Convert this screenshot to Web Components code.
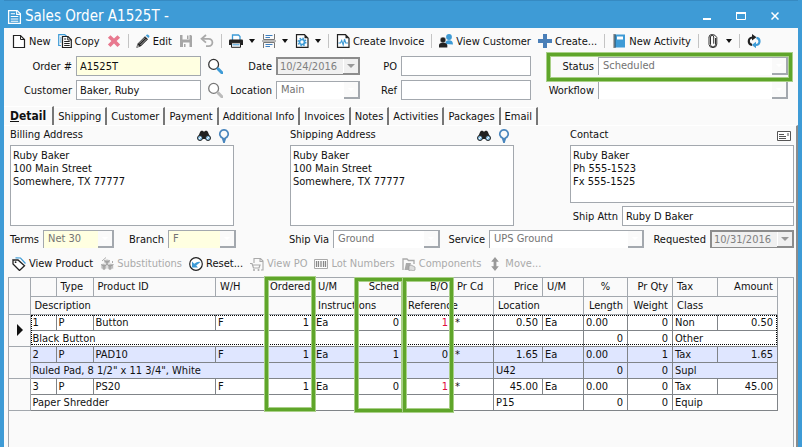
<!DOCTYPE html>
<html lang="en">
<head>
<meta charset="utf-8">
<title>Sales Order A1525T</title>
<style>
  html, body { margin: 0; }
  body {
    font: 11px/13px Tahoma, "DejaVu Sans Condensed", "DejaVu Sans", sans-serif;
    color: #111;
    --line: #a3a8ae;
    --blue: #3e9bd6;
    --green: #5fa52a;
    --required: #ffffe1;
  }
</style>
</head>
<body>
<app-window heading="Sales Order A1525T -">
  <tool-bar>
    <tool-button icon="page">New</tool-button>
    <tool-button icon="copy">Copy</tool-button>
    <tool-button icon="delete" label="Delete"></tool-button>
    <tool-sep></tool-sep>
    <tool-button icon="pencil">Edit</tool-button>
    <tool-button icon="save" label="Save"></tool-button>
    <tool-button icon="undo" label="Undo"></tool-button>
    <tool-sep></tool-sep>
    <tool-button icon="printer" label="Print" menu></tool-button>
    <tool-button icon="forms" label="Forms" menu></tool-button>
    <tool-button icon="gear" label="Settings" menu></tool-button>
    <tool-sep></tool-sep>
    <tool-button icon="invoice">Create Invoice</tool-button>
    <tool-sep></tool-sep>
    <tool-button icon="people">View Customer</tool-button>
    <tool-button icon="plus">Create...</tool-button>
    <tool-sep></tool-sep>
    <tool-button icon="notebook">New Activity</tool-button>
    <tool-sep></tool-sep>
    <tool-button icon="clip" label="Attachments" menu></tool-button>
    <tool-sep></tool-sep>
    <tool-button icon="refresh" label="Refresh"></tool-button>
  </tool-bar>
  <order-header></order-header>
  <tab-strip tabs="Detail,Shipping,Customer,Payment,Additional Info,Invoices,Notes,Activities,Packages,Email"></tab-strip>
  <detail-panel>
    <address-panels></address-panels>
    <terms-row></terms-row>
    <tool-bar compact>
      <tool-button icon="tag">View Product</tool-button>
      <tool-button icon="boxes" off>Substitutions</tool-button>
      <tool-button icon="reset">Reset...</tool-button>
      <tool-button icon="po" off>View PO</tool-button>
      <tool-button icon="barcode" off>Lot Numbers</tool-button>
      <tool-button icon="parts" off>Components</tool-button>
      <tool-button icon="move" off>Move...</tool-button>
    </tool-bar>
    <order-grid></order-grid>
  </detail-panel>
</app-window>

<script>
const ICONS = {
  doc: '<path d="M1.5 1.5h8l3 3v9h-11z" fill="none" stroke="#fff" stroke-width="1.2"/><path d="M9 1.5V5h3.500M3.500 4.500h4M3.500 7h7M3.500 9.300h7M3.500 11.500h7" fill="none" stroke="#fff"/>',
  page: '<path d="M1.500 1.500h7l4 4v8h-11z" fill="#fff" stroke="#222" stroke-width="1.200"/><path d="M8.500 1.500v4h4" fill="none" stroke="#222"/>',
  copy: '<path d="M3 11.500H.7V.7h6l2 1.500" fill="none" stroke="#3e9bd6" stroke-width="1.200"/><path d="M2 4h1.500M2 6h1.500M2 8h1.500" stroke="#3e9bd6"/><path d="M4.500 2.500h5.500l3.300 3.300v7.700H4.500z" fill="#fff" stroke="#222" stroke-width="1.200"/><path d="M9.800 2.500V6h3.500M6.200 5h2M6.200 7.500h5.500M6.200 9.500h5.500M6.200 11.500h5.500" fill="none" stroke="#222"/>',
  delete: '<path d="M3.500 1.200 7 4.600l3.500-3.400 2.600 2.600L9.600 7l3.500 3.400-2.600 2.600L7 9.500 3.500 13 .9 10.400 4.400 7 .9 3.800z" fill="#e8798f"/>',
  pencil: '<path d="M.6 13.500 2 9.200l7-7 3 3-7.100 7z" fill="#222"/><path d="m3 9.600 6-6M4.500 11l6-6" stroke="#fff" stroke-width=".6"/><path d="m1.700 10.500 2 1.900-3 1z" fill="#eee" stroke="#222" stroke-width=".5"/><path d="M9.800 1.500 11 .5c1-.6 2.900 1.200 2.300 2.400l-1 1.200z" fill="#3e9bd6"/>',
  save: '<path d="M1 1h11l1 1v11H1z" fill="#a6a6a6"/><path d="M3.500 1h7v4.500h-7zM4 8.500h6.500V13H4z" fill="#fafafa"/><path d="M8 1.500h1.500V5H8zM5 10h1.500v3H5z" fill="#a6a6a6"/>',
  undo: '<path d="M2.500 4.800h6.200a3.600 3.600 0 0 1 0 7.400H6" fill="none" stroke="#aaa" stroke-width="1.800"/><path d="M6 1 1.600 4.800 6 8.700" fill="none" stroke="#aaa" stroke-width="1.800"/>',
  printer: '<path d="M3.500 6V1h6l1.500 1.500V6" fill="#fff" stroke="#3e9bd6" stroke-width="1.300"/><path d="M0 6.500q0-1 1-1h12q1 0 1 1V11H0z" fill="#222"/><path d="M2.500 8.800h9v4.500h-9z" fill="#fafafa" stroke="#222"/><path d="M3.500 10.800h7" stroke="#3e9bd6"/>',
  forms: '<path d="M1.500 0v5.500h11V0M1.500 14V8.500h11V14M0 7h14" fill="none" stroke="#777"/><path d="M3.500 1.500h7M3.500 3.500h4.500M3.500 10.500h7M3.500 12.500h4.500" stroke="#3e7fc0"/>',
  gear: '<path d="M1.500.7h8l3.500 3.500v9.100H1.500z" fill="#fff" stroke="#222" stroke-width="1.200"/><path d="M9.500.7v3.500H13z" fill="#222"/><circle cx="7" cy="8" r="2.500" fill="none" stroke="#3e9bd6" stroke-width="1.700"/><circle cx="7" cy="8" r="3.800" fill="none" stroke="#3e9bd6" stroke-width="1.400" stroke-dasharray="1.500 1.480"/>',
  invoice: '<path d="M1.500.7h8l3.500 3.500v9.100H1.500z" fill="#fff" stroke="#222" stroke-width="1.200"/><path d="M9.500.7v3.500H13z" fill="#222"/><path d="M2.500 9h2l1.200-2.500L7.200 11l1.300-6 1.200 4H12" fill="none" stroke="#3e9bd6" stroke-width="1.100"/>',
  people: '<circle cx="10" cy="3" r="2.900" fill="#3e9bd6"/><path d="M6.500 10V8.500Q7 6 10 6.200q4 0 4 4.300z" fill="#3e9bd6"/><circle cx="4" cy="6" r="2.900" fill="#222" stroke="#fafafa" stroke-width=".5"/><path d="M0 13.500V11q.4-2.300 4-2.300T8.300 11v2.500z" fill="#222"/>',
  plus: '<path d="M5 0h4v5h5v4H9v5H5V9H0V5h5z" fill="#4a7fb8"/>',
  notebook: '<path d="M2.500.5H13v13H2.500z" fill="#3e9bd6"/><path d="M5 2.500h6v3H5z" fill="#fff"/><path d="M2.500.5v13" stroke="#222" stroke-width="2.400" stroke-dasharray="1 1"/>',
  clip: '<path d="M9.500 4v6.500a2.500 2.500 0 0 1-5 0V3a1.600 1.600 0 0 1 3.200 0v6.700M3 4V3q0-2.500 3.200-2.500T10.800 3.500V10q0 3.600-3.800 3.600T3 10.500V3.800" fill="none" stroke="#333"/>',
  refresh: '<path d="M5 10.800Q1.800 10.500 1.800 7.300 1.800 3.800 5.500 3.500" fill="none" stroke="#222" stroke-width="2.200"/><path d="M5 0 9.500 3.300 5 6.600z" fill="#222"/><path d="M9.500 3.800q3 .3 3 3.500 0 3.500-3.700 3.700" fill="none" stroke="#3e9bd6" stroke-width="2.200"/><path d="M9 14.200 4.800 11 9 7.700z" fill="#3e9bd6"/>',
  search: '<circle cx="5.800" cy="5.600" r="4.300" fill="#fff" stroke="#333" stroke-width="1.100"/><path d="m9.700 9.500 3.600 3.700" stroke="#3e9bd6" stroke-width="2.600" stroke-linecap="round"/>',
  searchoff: '<circle cx="5.800" cy="5.600" r="4.300" fill="#fff" stroke="#777" stroke-width="1.100"/><path d="m9.700 9.500 3.600 3.700" stroke="#bbb" stroke-width="2.600" stroke-linecap="round"/>',
  binoculars: '<path d="M1 8 3.300 2.500 5 1.500l1.500 1h1l1.500-1 1.700 1L13 8l-3 2H4z" fill="#222"/><circle cx="3" cy="9" r="2.500" fill="#8cc6ec" stroke="#222"/><circle cx="11" cy="9" r="2.500" fill="#8cc6ec" stroke="#222"/><path d="m2 10 2-2m6 2 2-2" stroke="#fff"/>',
  pin: '<path d="M7 13.600 5.600 9A4.200 4.200 0 1 1 8.400 9z" fill="#fafafa" stroke="#4a86bd" stroke-width="1.700"/><path d="m5.400 9 1.600 5 1.600-5z" fill="#4a86bd"/>',
  card: '<path d="M.5 2.500h13v9H.5z" fill="#fff" stroke="#555"/><path d="M2 5.500h5M2 7.500h7M2 9.500h7" stroke="#555"/><path d="M10 4h2v3h-2z" fill="#aaa"/>',
  tag: '<path d="m3.500.8 5 .2 5 5.500" fill="none" stroke="#3e9bd6" stroke-width="1.200"/><path d="M1 2.800 6 3l6.500 5.800-5 4.700L1 7z" fill="#fff" stroke="#222" stroke-width="1.300"/><circle cx="3.600" cy="5.200" r=".9" fill="#222"/>',
  boxes: '<path d="m1 7.500 3-1.500 3 1.500v4L4 13l-3-1.500zM7 7.500 10 6l3.500 1.500v4L10 13l-3-1.500zM4 3.500 7 2l3 1.500v3L7 8 4 6.500z" fill="#bdbdbd" stroke="#f5f5f5" stroke-width=".7"/><path d="m1 7.500 3 1.500v4m0-4 3-1.500M7 7.500 10 9v4m0-4 3.500-1.500M4 3.500 7 5v3m0-3 3-1.500M2 4 6 .5M12.500 4v2" fill="none" stroke="#888" stroke-width=".7"/>',
  reset: '<circle cx="7" cy="7" r="6.300" fill="#fff" stroke="#222" stroke-width="1.200"/><path d="M3 4.500v6h6L7.200 8.600 11.500 5q-3-.8-6.300 1.700z" fill="#3e9bd6"/>',
  po: '<path d="M4 6V1.500h6.500L13 4v9h-2M10 1.500v3h3" fill="none" stroke="#aaa" stroke-width="1.100"/><path d="M0 6.500h2l1.500 4.500H9l1-3H2.600" fill="none" stroke="#aaa" stroke-width="1.200"/><circle cx="4" cy="13" r="1" fill="#aaa"/><circle cx="8.500" cy="13" r="1" fill="#aaa"/>',
  barcode: '<path d="M.5 2.500h13v9H.5z" fill="#fff" stroke="#aaa"/><path d="M2.500 4v6M4.500 4v6M7 4v6M9.500 4v6M11.500 4v6" stroke="#888" stroke-width="1.300"/>',
  parts: '<path d="M1 13V2h4l1.500 1.500H12V7" fill="none" stroke="#aaa" stroke-width="1.300"/><path d="M2.500 13 4 6h5l-2 7z" fill="#aaa"/><path d="m7 9 2-1 2 1 2 1v3l-2 1-2-1-2 1z" fill="#ddd" stroke="#999" stroke-width=".7"/>',
  move: '<path d="m7 0 3.800 4.800H8.400v4.400h2.400L7 14 3.200 9.200h2.400V4.800H3.200z" fill="#999"/>'
};
const icon = (name, size = 14) =>
  `<svg width="${size}" height="${size}" viewBox="0 0 14 14" aria-hidden="true">${ICONS[name]}</svg>`;

const BASE = `<style>
  *, *::before, *::after { box-sizing: border-box; }
  svg { display: block; flex: none; }
  button, input, select, textarea { font: inherit; color: inherit; margin: 0; border: 0; border-radius: 0; padding: 0; background: none; outline: 0; }
</style>`;

class Element extends HTMLElement {
  connectedCallback() {
    if (this.shadowRoot) return;
    this.attachShadow({ mode: 'open' }).innerHTML = BASE + this.render();
  }
  flag(name) { return this.hasAttribute(name); }
  text(name) { return this.getAttribute(name) || ''; }
}

customElements.define('app-window', class extends Element {
  render() {
    return `<style>
      :host { display: flex; flex-direction: column; box-sizing: border-box; min-height: 100vh; background: #fafafa;
        border: solid var(--blue); border-width: 0 4px; }
      header { display: flex; align-items: center; gap: 3px; height: 28px; padding: 3px 18px 0 3px; background: var(--blue); border-top: 1px solid #368ac2; color: #fff; }
      h1 { flex: 1; margin: 0; font: 15px/20px Tahoma, "DejaVu Sans Condensed", sans-serif; }
      .controls { display: flex; gap: 24px; }
      .controls button { width: 10px; height: 12px; display: grid; place-items: center; }
    </style>
    <header>${icon('doc', 15)}<h1>${this.text('heading')}</h1>
      <div class="controls">
        <button aria-label="Minimize"><svg width="10" height="8"><path d="M1 6h8v2H1z" fill="#fff"/></svg></button>
        <button aria-label="Maximize"><svg width="10" height="8"><path d="M.5 1.500h9v6h-9z" fill="none" stroke="#fff"/><path d="M0 0h10v2H0z" fill="#fff"/></svg></button>
        <button aria-label="Close"><svg width="8" height="8"><path d="m.5.5 7 7m0-7-7 7" stroke="#fff" stroke-width="1.500"/></svg></button>
      </div>
    </header><slot></slot>`;
  }
});

customElements.define('tool-bar', class extends Element {
  render() {
    return `<style>
      :host { display: flex; align-items: center; gap: 7px; box-sizing: border-box; height: 26px; padding: 0 8px; }
      :host([compact]) { height: 29px; padding-top: 2px; }
    </style><slot></slot>`;
  }
});

customElements.define('tool-sep', class extends Element {
  render() { return `<style>:host { display: block; width: 1px; height: 14px; background: #c4c4c4; }</style>`; }
});

customElements.define('tool-button', class extends Element {
  render() {
    const label = this.text('label');
    return `<style>
      :host { display: block; }
      button { display: flex; align-items: center; gap: 3px; height: 18px; white-space: nowrap; }
      button:disabled { color: #aaa; }
      .caret { border: 3px solid transparent; border-top: 4px solid #111; border-bottom: 0; margin-left: 3px; }
    </style>
    <button ${label ? `aria-label="${label}"` : ''} ${this.flag('off') ? 'disabled' : ''}>
      ${icon(this.text('icon'))}<slot></slot>${this.flag('menu') ? '<span class="caret"></span>' : ''}</button>`;
  }
});

const FIELD = `
  :host { display: flex; align-items: center; gap: 4px; min-width: 0; }
  label { flex: none; width: var(--label, auto); text-align: right; white-space: nowrap; }
  .box { flex: 1; display: flex; min-width: 0; }
`;

customElements.define('text-field', class extends Element {
  render() {
    return `<style>${FIELD}
      input { width: 100%; min-width: 0; height: 20px; padding: 0 4px 0 3px; border: 1px solid var(--line); background: ${this.flag('required') ? 'var(--required)' : '#fff'}; }
    </style><label for="f">${this.text('label')}</label><span class="box"><input id="f" value="${this.text('value')}"></span>`;
  }
});

customElements.define('combo-field', class extends Element {
  render() {
    return `<style>${FIELD}
      .box { height: 18px; border: solid var(--line); border-width: 1px 0 0 1px; background: ${this.flag('required') ? 'var(--required)' : '#fff'}; }
      select { appearance: none; flex: 1; min-width: 0; padding: 0 4px 2px; color: #737373; opacity: 1; }
      .drop { flex: none; width: 16px; display: grid; place-items: center; background: #fafafa; border: solid var(--line); border-width: 0 2px 2px 0; }
      .drop::after { content: ""; border: 3px solid transparent; border-top: 3px solid #fff; border-bottom: 0; }
    </style><label for="f">${this.text('label')}</label>
    <span class="box"><select id="f" disabled><option>${this.text('value')}</option></select><span class="drop"></span></span>`;
  }
});

customElements.define('date-field', class extends Element {
  render() {
    return `<style>${FIELD}
      .box { height: 18px; background: #f0f0f0; border: solid #8c8c8c; border-width: 2px 1px 1px 2px; }
      input { flex: 1; min-width: 0; padding-left: 2px; color: #808080; }
      button { flex: none; width: 16px; display: grid; place-items: center; border: solid #8c8c8c; border-width: 0 1px 1px 0; box-shadow: inset 1px 0 #fff; }
      button::after { content: ""; border: 4px solid transparent; border-top: 4px solid #999; border-bottom: 0; }
    </style><label for="f">${this.text('label')}</label>
    <span class="box"><input id="f" value="${this.text('value')}" disabled><button aria-label="Open calendar" disabled></button></span>`;
  }
});

customElements.define('memo-field', class extends Element {
  render() {
    const icons = this.text('icons').split(',');
    return `<style>
      :host { display: block; }
      .head { display: flex; align-items: center; gap: 6px; height: 19px; padding-right: 3px; }
      label { flex: 1; padding-bottom: 2px; }
      textarea { display: block; width: 100%; height: ${this.flag('short') ? 58 : 81}px; padding: 3px 2px; border: 1px solid var(--line); background: #fff; resize: none; overflow: hidden; }
    </style>
    <div class="head"><label for="f">${this.text('label')}</label>${icons.map(i => `<button aria-label="${i}">${icon(i)}</button>`).join('')}</div>
    <textarea id="f">${this.textContent}</textarea>`;
  }
});

customElements.define('order-header', class extends Element {
  render() {
    return `<style>
      :host { display: grid; grid-template-columns: minmax(0, 197fr) 20px minmax(0, 131fr) minmax(0, 167fr) minmax(0, 253fr);
        gap: 4px; padding: 2px 10px 6px 0; grid-auto-rows: 20px; }
      .c1 { --label: 68px; } .c3 { --label: 43px; } .c4 { --label: 33px; } .c5 { --label: 59px; }
      button { display: grid; place-items: center; }
      .marked { position: relative; }
      .marked::after { content: ""; position: absolute; inset: -3px -4px -5px 12px; border: 3px solid var(--green); box-shadow: 0 0 0 1px #a9d088, inset 0 0 0 1px #a9d088; pointer-events: none; }
    </style>
    <text-field class="c1" label="Order #" value="A1525T" required></text-field>
    <button aria-label="Find order">${icon('search', 16)}</button>
    <date-field class="c3" label="Date" value="10/24/2016"></date-field>
    <text-field class="c4" label="PO"></text-field>
    <combo-field class="c5 marked" label="Status" value="Scheduled"></combo-field>
    <text-field class="c1" label="Customer" value="Baker, Ruby"></text-field>
    <button aria-label="Find customer">${icon('searchoff', 16)}</button>
    <combo-field class="c3" label="Location" value="Main"></combo-field>
    <text-field class="c4" label="Ref"></text-field>
    <combo-field class="c5" label="Workflow"></combo-field>`;
  }
});

customElements.define('tab-strip', class extends Element {
  render() {
    const tabs = this.text('tabs').split(',');
    return `<style>
      :host { display: flex; align-items: flex-end; height: 19px; }
      button { height: 18px; padding: 0 4px; border-right: 2px solid #777; border-top: 1px solid #fff; white-space: nowrap; }
      button[aria-selected=true] { height: 19px; padding: 0 6px; font-size: 12px; font-weight: bold; }
    </style>${tabs.map((t, i) => i
      ? `<button role="tab" aria-selected="false">${t}</button>`
      : `<button role="tab" aria-selected="true"><u>${t[0]}</u>${t.slice(1)}</button>`).join('')}`;
  }
});

customElements.define('detail-panel', class extends Element {
  render() {
    return `<style>
      :host { flex: 1; display: flex; flex-direction: column; border-right: 2px solid #8c8c8c; border-top: 1px solid #fff; }
    </style><slot></slot>`;
  }
});

customElements.define('address-panels', class extends Element {
  render() {
    return `<style>
      :host { display: grid; grid-template-columns: repeat(3, minmax(0, 1fr)); gap: 56px; padding: 0 2px 0 6px; }
      .contact { display: flex; flex-direction: column; gap: 3px; }
      text-field { --label: 48px; }
    </style>
    <memo-field label="Billing Address" icons="binoculars,pin">Ruby Baker\n100 Main Street\nSomewhere, TX 77777</memo-field>
    <memo-field label="Shipping Address" icons="binoculars,pin">Ruby Baker\n100 Main Street\nSomewhere, TX 77777</memo-field>
    <div class="contact">
      <memo-field label="Contact" icons="card" short>Ruby Baker\nPh 555-1523\nFx 555-1525</memo-field>
      <text-field label="Ship Attn" value="Ruby D Baker"></text-field>
    </div>`;
  }
});

customElements.define('terms-row', class extends Element {
  render() {
    return `<style>
      :host { display: grid; grid-template-columns: minmax(0, 104fr) minmax(0, 117fr) minmax(0, 199fr) minmax(0, 199fr) minmax(0, 145fr);
        gap: 5px; padding: 4px 2px 0 6px; }
    </style>
    <combo-field style="--label: 29px" label="Terms" value="Net 30" required></combo-field>
    <combo-field style="--label: 45px" label="Branch" value="F" required></combo-field>
    <combo-field style="--label: 88px" label="Ship Via" value="Ground"></combo-field>
    <combo-field style="--label: 40px" label="Service" value="UPS Ground"></combo-field>
    <date-field style="--label: 57px" label="Requested" value="10/31/2016"></date-field>`;
  }
});

customElements.define('order-grid', class extends Element {
  render() {
    const rows = [
      { n: 1, id: 'Button', o: 1, s: 0, b: 1, price: '0.50', q: 0, tax: 'Non', amt: '0.50', desc: 'Black Button', loc: '', cls: 'Other' },
      { n: 2, id: 'PAD10', o: 1, s: 1, b: 0, price: '1.65', q: 1, tax: 'Tax', amt: '1.65', desc: 'Ruled Pad, 8 1/2" x 11 3/4", White', loc: 'U42', cls: 'Supl' },
      { n: 3, id: 'PS20', o: 1, s: 0, b: 1, price: '45.00', q: 0, tax: 'Tax', amt: '45.00', desc: 'Paper Shredder', loc: 'P15', cls: 'Equip' }
    ];
    const widths = [21, 26, 37, 0, 50, 48, 43, 47, 49, 41, 49, 41, 44, 45, 45, 60];
    return `<style>
      :host { flex: 1; display: block; position: relative; margin: 0 2px 0 4px; border: solid var(--line); border-width: 1px 1px 0 1px; }
      .wrap { padding-right: 15px; }
      table { width: 100%; table-layout: fixed; border-collapse: collapse; }
      th, td { padding: 0 4px 0 2px; border: 1px solid #808488; text-align: left; font-weight: normal; white-space: nowrap; overflow: hidden; }
      thead tr:first-child > * { border-top: 0; }
      tr > .gutter { border-left: 0; border-color: var(--line); padding: 0; }
      th { height: 18px; border-color: var(--line); padding: 0 4px; }
      td { height: 16px; background: #fff; }
      tbody { position: relative; }
      tbody td.gutter { background: #fafafa; }
      .alt td:not(.gutter) { background: #dfe6ff; }
      .r { text-align: right; }
      th.c { text-align: center; }
      .due { color: #e0103c; }
      .pointer { display: block; margin-left: 8px; width: 0; border: 6px solid transparent; border-left-color: #111; border-right: 0; }
      .focus { position: absolute; inset: 1px 1px 1px 22px; border: 1px dotted #000; pointer-events: none; }
      .mark { position: absolute; border: 3px solid var(--green); box-shadow: 0 0 0 1px #a9d088, inset 0 0 0 1px #a9d088; pointer-events: none; width: 50px; height: 134px; top: 0; }
      .ordered { right: 478px; top: -1px; }
      .sched { right: 388px; }
      .bo { right: 340px; }
    </style>
    <div class="wrap"><table>
      <colgroup>${widths.map(w => `<col${w ? ` style="width:${w}px"` : ''}>`).join('')}</colgroup>
      <thead>
        <tr><th class="gutter" rowspan="2"></th><th></th><th>Type</th><th>Product ID</th><th>W/H</th><th class="r">Ordered</th><th>U/M</th><th class="r">Sched</th><th class="r">B/O</th><th>Pr Cd</th><th class="r">Price</th><th>U/M</th><th class="c">%</th><th class="r">Pr Qty</th><th>Tax</th><th class="r">Amount</th></tr>
        <tr><th colspan="5">Description</th><th colspan="2">Instructions</th><th colspan="2">Reference</th><th colspan="2">Location</th><th class="r">Length</th><th class="r">Weight</th><th colspan="2">Class</th></tr>
      </thead>
      ${rows.map(r => `<tbody class="${r.n === 2 ? 'alt' : ''}">
        <tr><td class="gutter" rowspan="2">${r.n === 1 ? '<span class="pointer"></span><span class="focus"></span>' : ''}</td><td>${r.n}</td><td>P</td><td>${r.id}</td><td>F</td><td class="r">${r.o}</td><td>Ea</td><td class="r">${r.s}</td><td class="r${r.b ? ' due' : ''}">${r.b}</td><td>*</td><td class="r">${r.price}</td><td>Ea</td><td>0.00</td><td class="r">${r.q}</td><td>${r.tax}</td><td class="r">${r.amt}</td></tr>
        <tr><td colspan="5">${r.desc}</td><td colspan="2"></td><td colspan="2"></td><td colspan="2">${r.loc}</td><td class="r">0</td><td class="r">0</td><td colspan="2">${r.cls}</td></tr>
      </tbody>`).join('')}
    </table></div>
    <span class="mark ordered"></span><span class="mark sched"></span><span class="mark bo"></span>`;
  }
});
</script>
</body>
</html>
